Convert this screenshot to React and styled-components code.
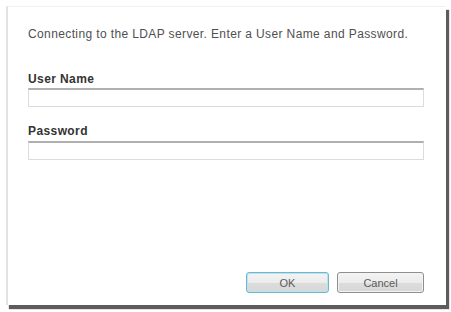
import styled, { createGlobalStyle } from "styled-components";

const GlobalStyle = createGlobalStyle`
  html, body {
    margin: 0;
    padding: 0;
    background: #ffffff;
  }
  body {
    font-family: "Liberation Sans", Arial, sans-serif;
  }
`;

const Page = styled.div`
  width: 451px;
  height: 312px;
  padding: 6px 5px 6px 6px;
  box-sizing: border-box;
`;

const Dialog = styled.form`
  height: 299px;
  width: 440px;
  box-sizing: border-box;
  background: #ffffff;
  border-left: 2px solid #e2e2e2;
  border-top: 1px solid #f0f0f0;
  box-shadow: 3px 4px 1px #5c5c5c;
  padding: 20px 22px 12px 20px;
  display: flex;
  flex-direction: column;
`;

const Intro = styled.p`
  margin: 0 0 31px;
  font-size: 12px;
  line-height: 14px;
  color: #505050;
  letter-spacing: 0.38px;
`;

const Field = styled.div`
  display: flex;
  flex-direction: column;
  margin-bottom: 17px;
`;

const Label = styled.label`
  font-size: 12px;
  line-height: 14px;
  font-weight: bold;
  color: #333333;
  letter-spacing: 0.4px;
  margin-bottom: ${(p) => p.$gap}px;
`;

const Input = styled.input`
  height: 19px;
  box-sizing: border-box;
  border: 1px solid #dcdcdc;
  border-top: 2px solid #b0b0b0;
  background: #ffffff;
  padding: 0 4px;
  font-size: 12px;
  outline: none;
`;

const Actions = styled.div`
  margin-top: auto;
  display: flex;
  justify-content: flex-end;
  gap: 8px;
`;

const Button = styled.button`
  width: ${(p) => (p.$wide ? 87 : 83)}px;
  height: 21px;
  box-sizing: border-box;
  border-radius: 3px;
  border: 1px solid ${(p) => (p.$primary ? "#6fb6cf" : "#8e8e8e")};
  box-shadow: ${(p) =>
    p.$primary ? "inset 0 0 0 1px #b9e3f0" : "inset 0 0 0 1px #f4f4f4"};
  background: linear-gradient(#f3f3f3 0%, #ececec 50%, #dcdcdc 51%, #d8d8d8 100%);
  font-family: "Liberation Sans", Arial, sans-serif;
  font-size: 11px;
  color: #5a5a5a;
  padding: 0;
`;

export default function App() {
  return (
    <>
      <GlobalStyle />
      <Page>
        <Dialog onSubmit={(e) => e.preventDefault()}>
          <Intro>
            Connecting to the LDAP server. Enter a User Name and Password.
          </Intro>
          <Field>
            <Label htmlFor="user" $gap={2}>User Name</Label>
            <Input id="user" type="text" />
          </Field>
          <Field>
            <Label htmlFor="pass" $gap={3}>Password</Label>
            <Input id="pass" type="password" />
          </Field>
          <Actions>
            <Button $primary type="submit">OK</Button>
            <Button $wide type="button">Cancel</Button>
          </Actions>
        </Dialog>
      </Page>
    </>
  );
}
